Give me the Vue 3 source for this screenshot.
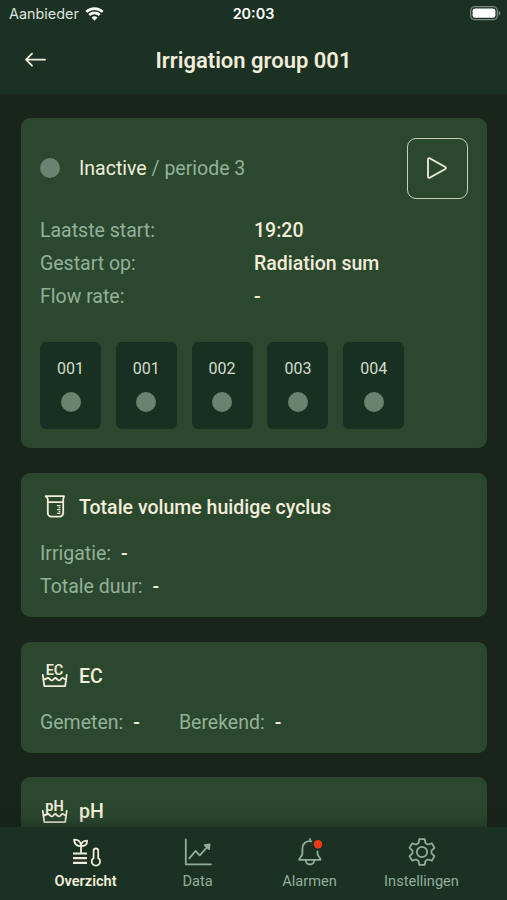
<template>
  <div class="screen">
    <header class="header">
      <div class="status-bar">
        <div class="carrier">
          <span class="carrier-name">Aanbieder</span>
          <svg class="wifi" width="19" height="14" viewBox="0 0 19 14">
            <path d="M1.4 4.9a11.6 11.6 0 0 1 16.2 0" />
            <path d="M4.3 8a7.5 7.5 0 0 1 10.4 0" />
            <path class="wifi-dot" d="M6.5 10.6a4.3 4.3 0 0 1 6 0l-3 3.1z" />
          </svg>
        </div>
        <span class="clock">20:03</span>
        <svg class="battery" width="31" height="15" viewBox="0 0 31 15">
          <rect class="battery-shell" x="0.7" y="0.7" width="26.6" height="13" rx="4" />
          <rect class="battery-level" x="2.6" y="2.6" width="22.8" height="9.2" rx="2.2" />
          <path class="battery-tip" d="M28.7 4.8c2.2.7 2.2 4.1 0 4.8z" />
        </svg>
      </div>
      <div class="title-bar">
        <svg class="back" width="22" height="16" viewBox="0 0 22 16">
          <path d="M21 7.7H2.2M8 1.7l-6 6 6 6" />
        </svg>
        <h1>Irrigation group 001</h1>
      </div>
    </header>

    <main class="content">
      <section class="card group-card">
        <div class="group-head">
          <span class="dot"></span>
          <p class="state"><span>Inactive</span> / periode 3</p>
          <button class="play">
            <svg width="22" height="24" viewBox="0 0 22 24">
              <path d="M2 3.3v17.4c0 1 .9 1.5 1.7 1L19.3 13c.8-.5.8-1.5 0-2L3.7 2.3C2.9 1.8 2 2.3 2 3.3z" />
            </svg>
          </button>
        </div>
        <dl class="details">
          <template v-for="row in details" :key="row.label">
            <dt>{{ row.label }}</dt>
            <dd>{{ row.value }}</dd>
          </template>
        </dl>
        <div class="valves">
          <div v-for="(valve, i) in valves" :key="i" class="valve">
            <span>{{ valve }}</span>
            <span class="dot"></span>
          </div>
        </div>
      </section>

      <section v-for="card in cards" :key="card.title" class="card">
        <h2>
          <svg v-if="card.icon === 'beaker'" class="card-icon" width="30" height="28" viewBox="0 0 30 28">
            <path d="M5.7 4.2H24l-.8 3v13.8a3.7 3.7 0 0 1-3.7 3.7h-8a3.7 3.7 0 0 1-3.7-3.7V6.8zM8 10.2h15.2" />
            <path class="ticks" d="M17 13.6h3.4M18.7 15.6h1.7M17 17.6h3.4M18.7 19.6h1.7M17 21.4h3.4" />
          </svg>
          <svg v-else class="card-icon" width="30" height="28" viewBox="0 0 30 28">
            <text x="14.5" y="13.9" text-anchor="middle">{{ card.title }}</text>
            <path d="M2.8 13.8l1.5 11.3h20.9l1.5-11.3M3.8 18.4c2.1 0 2.6-1.4 4.2-1.4s2 2.4 3.8 2.4 1.8-2.4 3.4-2.4 2 2.4 3.8 2.4 1.8-2.4 3.4-2.4 1.6 1.4 3.4 1.4" />
          </svg>
          {{ card.title }}
        </h2>
        <div class="values" :class="{ inline: card.inline }">
          <p v-for="label in card.labels" :key="label">
            {{ label }}<b>-</b>
          </p>
        </div>
      </section>
    </main>

    <nav class="tab-bar">
      <a class="tab active">
        <svg width="32" height="32" viewBox="0 0 32 32">
          <path d="M11 17V9.5M11 10.2C6.6 10.2 4.3 8 4.1 3.6 8.5 3.5 11 5.7 11 10.2zM11 10.2c0-3.4 2-5.5 6.1-5.5 0 3.8-2.1 5.5-6.1 5.5z" />
          <path class="soil" d="M3 17.5h14M3 22.2h14M3 26.9h14" />
          <path d="M23.6 22v-7.2a2.3 2.3 0 0 1 4.6 0V22a4.2 4.2 0 1 1-4.6 0z" />
        </svg>
        <span>Overzicht</span>
      </a>
      <a class="tab">
        <svg width="32" height="32" viewBox="0 0 32 32">
          <path d="M3.8 3.5v24.8H29M7.3 22.3l6.2-7.3 4.3 4.3 8.7-9.8" />
          <path class="arrow" d="M27.6 8.3l-4.9.8 4.3 4z" />
        </svg>
        <span>Data</span>
      </a>
      <a class="tab">
        <svg width="32" height="32" viewBox="0 0 32 32">
          <path d="M17.4 5.3c-5.2-.9-9 2.5-9 7.3v5.2c0 2.3-3.2 3.7-3.2 6h21.3c0-2.3-3-3.7-3-6v-2.500M16 3v2M11.8 24.3a4.2 4.2 0 0 0 8.400 0" />
          <circle class="badge" cx="24" cy="8.2" r="4.2" />
        </svg>
        <span>Alarmen</span>
      </a>
      <a class="tab">
        <svg width="32" height="32" viewBox="0 0 32 32">
          <path d="M13.3 3.2h5.4l.9 4 2.3 1.3 3.9-1.2 2.7 4.6-3 2.8v2.6l3 2.8-2.7 4.6-3.900-1.200-2.300 1.300-.9 4h-5.400l-.9-4-2.300-1.300-3.900 1.200-2.700-4.600 3-2.800v-2.600l-3-2.800 2.700-4.600 3.900 1.200 2.300-1.300z" />
          <circle cx="16" cy="16" r="5.2" />
        </svg>
        <span>Instellingen</span>
      </a>
    </nav>
  </div>
</template>

<script setup>
const details = [
  { label: 'Laatste start:', value: '19:20' },
  { label: 'Gestart op:', value: 'Radiation sum' },
  { label: 'Flow rate:', value: '-' }
];

const valves = ['001', '001', '002', '003', '004'];

const cards = [
  { title: 'Totale volume huidige cyclus', icon: 'beaker', labels: ['Irrigatie:', 'Totale duur:'] },
  { title: 'EC', icon: 'water', inline: true, labels: ['Gemeten:', 'Berekend:'] },
  { title: 'pH', icon: 'water', inline: true, labels: [] }
];
</script>

<style>
body {
  background: #19251b;
}
</style>

<style scoped>
.screen {
  display: flex;
  flex-direction: column;
  height: 100vh;
  overflow: hidden;
  background: #19251b;
  color: #f1edd9;
  font-family: Roboto, "Liberation Sans", sans-serif;
  font-size: 19.5px;
}
h1, h2, p, dl, dd {
  margin: 0;
}
svg {
  display: block;
  flex: none;
  overflow: visible;
  fill: none;
  stroke: currentColor;
  stroke-width: 1.8;
  stroke-linecap: round;
  stroke-linejoin: round;
}
b {
  font-weight: 500;
}

/* 顶部 */
.header {
  flex: none;
  height: 94px;
  background: #1b3124;
}
.status-bar {
  display: grid;
  grid-template-columns: 1fr auto 1fr;
  align-items: center;
  height: 27px;
  padding: 0 6px 0 9px;
  color: #fff;
  font-family: Inter, sans-serif;
  font-size: 14.4px;
}
.carrier {
  display: flex;
  align-items: center;
  gap: 6px;
}
.carrier-name {
  color: #dce2dd;
}
.wifi {
  stroke-width: 2.6;
  stroke-linecap: butt;
}
.wifi-dot {
  fill: #fff;
  stroke: none;
}
.clock {
  margin-right: 3px;
  font-weight: 600;
}
.battery {
  justify-self: end;
}
.battery-shell {
  stroke: #7c8a81;
  stroke-width: 1.3;
}
.battery-level {
  fill: #fff;
  stroke: none;
}
.battery-tip {
  fill: #7c8a81;
  stroke: none;
}
.title-bar {
  display: grid;
  grid-template-columns: 1fr auto 1fr;
  align-items: center;
  height: 66px;
  padding: 0 24px;
}
h1 {
  font-size: 22px;
  font-weight: 600;
}

/* 卡片 */
.content {
  display: flex;
  flex: 1;
  flex-direction: column;
  gap: 24.6px;
  min-height: 0;
  padding: 24.4px 19.8px 0 20.5px;
  overflow: hidden;
}
.card {
  flex: none;
  padding: 20.5px 19.5px 13.5px;
  border-radius: 9px;
  background: #2b482f;
}
.group-card {
  box-sizing: border-box;
  height: 330px;
  padding-top: 19.5px;
}
.dot {
  width: 20px;
  height: 20px;
  border-radius: 50%;
  background: #668470;
}
.group-head {
  display: flex;
  align-items: center;
}
.state {
  flex: 1;
  margin-left: 19px;
  color: #92b197;
}
.state span {
  color: #f1edd9;
}
.play {
  display: flex;
  align-items: center;
  justify-content: center;
  width: 61px;
  height: 61px;
  padding: 0;
  border: 1.5px solid #c6ceb8;
  border-radius: 9px;
  background: none;
  color: #f1edd9;
}
.details {
  display: grid;
  grid-template-columns: 214px 1fr;
  margin-top: 15.4px;
  line-height: 33px;
}
dt {
  color: #92b197;
}
dd {
  font-weight: 500;
}
.valves {
  display: flex;
  gap: 14.8px;
  margin-top: 28.6px;
}
.valve {
  display: flex;
  flex-direction: column;
  align-items: center;
  gap: 14px;
  box-sizing: border-box;
  width: 61px;
  height: 87px;
  padding-top: 17px;
  border-radius: 6px;
  background: #183022;
  color: #d5dccb;
  font-size: 16px;
  line-height: 19px;
}
h2 {
  display: flex;
  align-items: center;
  gap: 9px;
  height: 28px;
  font-size: 19.5px;
  font-weight: 500;
}
.card-icon {
  margin-bottom: 2px;
}
.card-icon text {
  fill: currentColor;
  stroke: none;
  font-size: 14.5px;
  font-weight: 600;
}
.ticks {
  stroke-width: 1.3;
  stroke-linecap: butt;
}
.values {
  padding-top: 16px;
  line-height: 33px;
  color: #92b197;
}
.values.inline {
  display: flex;
  gap: 39px;
}
.values b {
  margin-left: 10px;
  color: #f1edd9;
}

/* 底部导航 */
.tab-bar {
  position: relative;
  display: grid;
  grid-template-columns: repeat(4, 112px);
  justify-content: center;
  flex: none;
  height: 73px;
  background: #1b3124;
  box-shadow: 0 -2px 12px rgba(20, 32, 22, 0.6);
}
.tab {
  display: flex;
  flex-direction: column;
  align-items: center;
  gap: 4px;
  padding-top: 9px;
  color: #91ae9a;
  font-size: 14.6px;
  line-height: 18px;
}
.tab.active {
  color: #f1edd9;
  font-weight: 600;
}
.soil {
  stroke-width: 2.2;
  stroke-linecap: butt;
}
.arrow {
  fill: currentColor;
}
.badge {
  fill: #f0381b;
  stroke: none;
}
</style>
